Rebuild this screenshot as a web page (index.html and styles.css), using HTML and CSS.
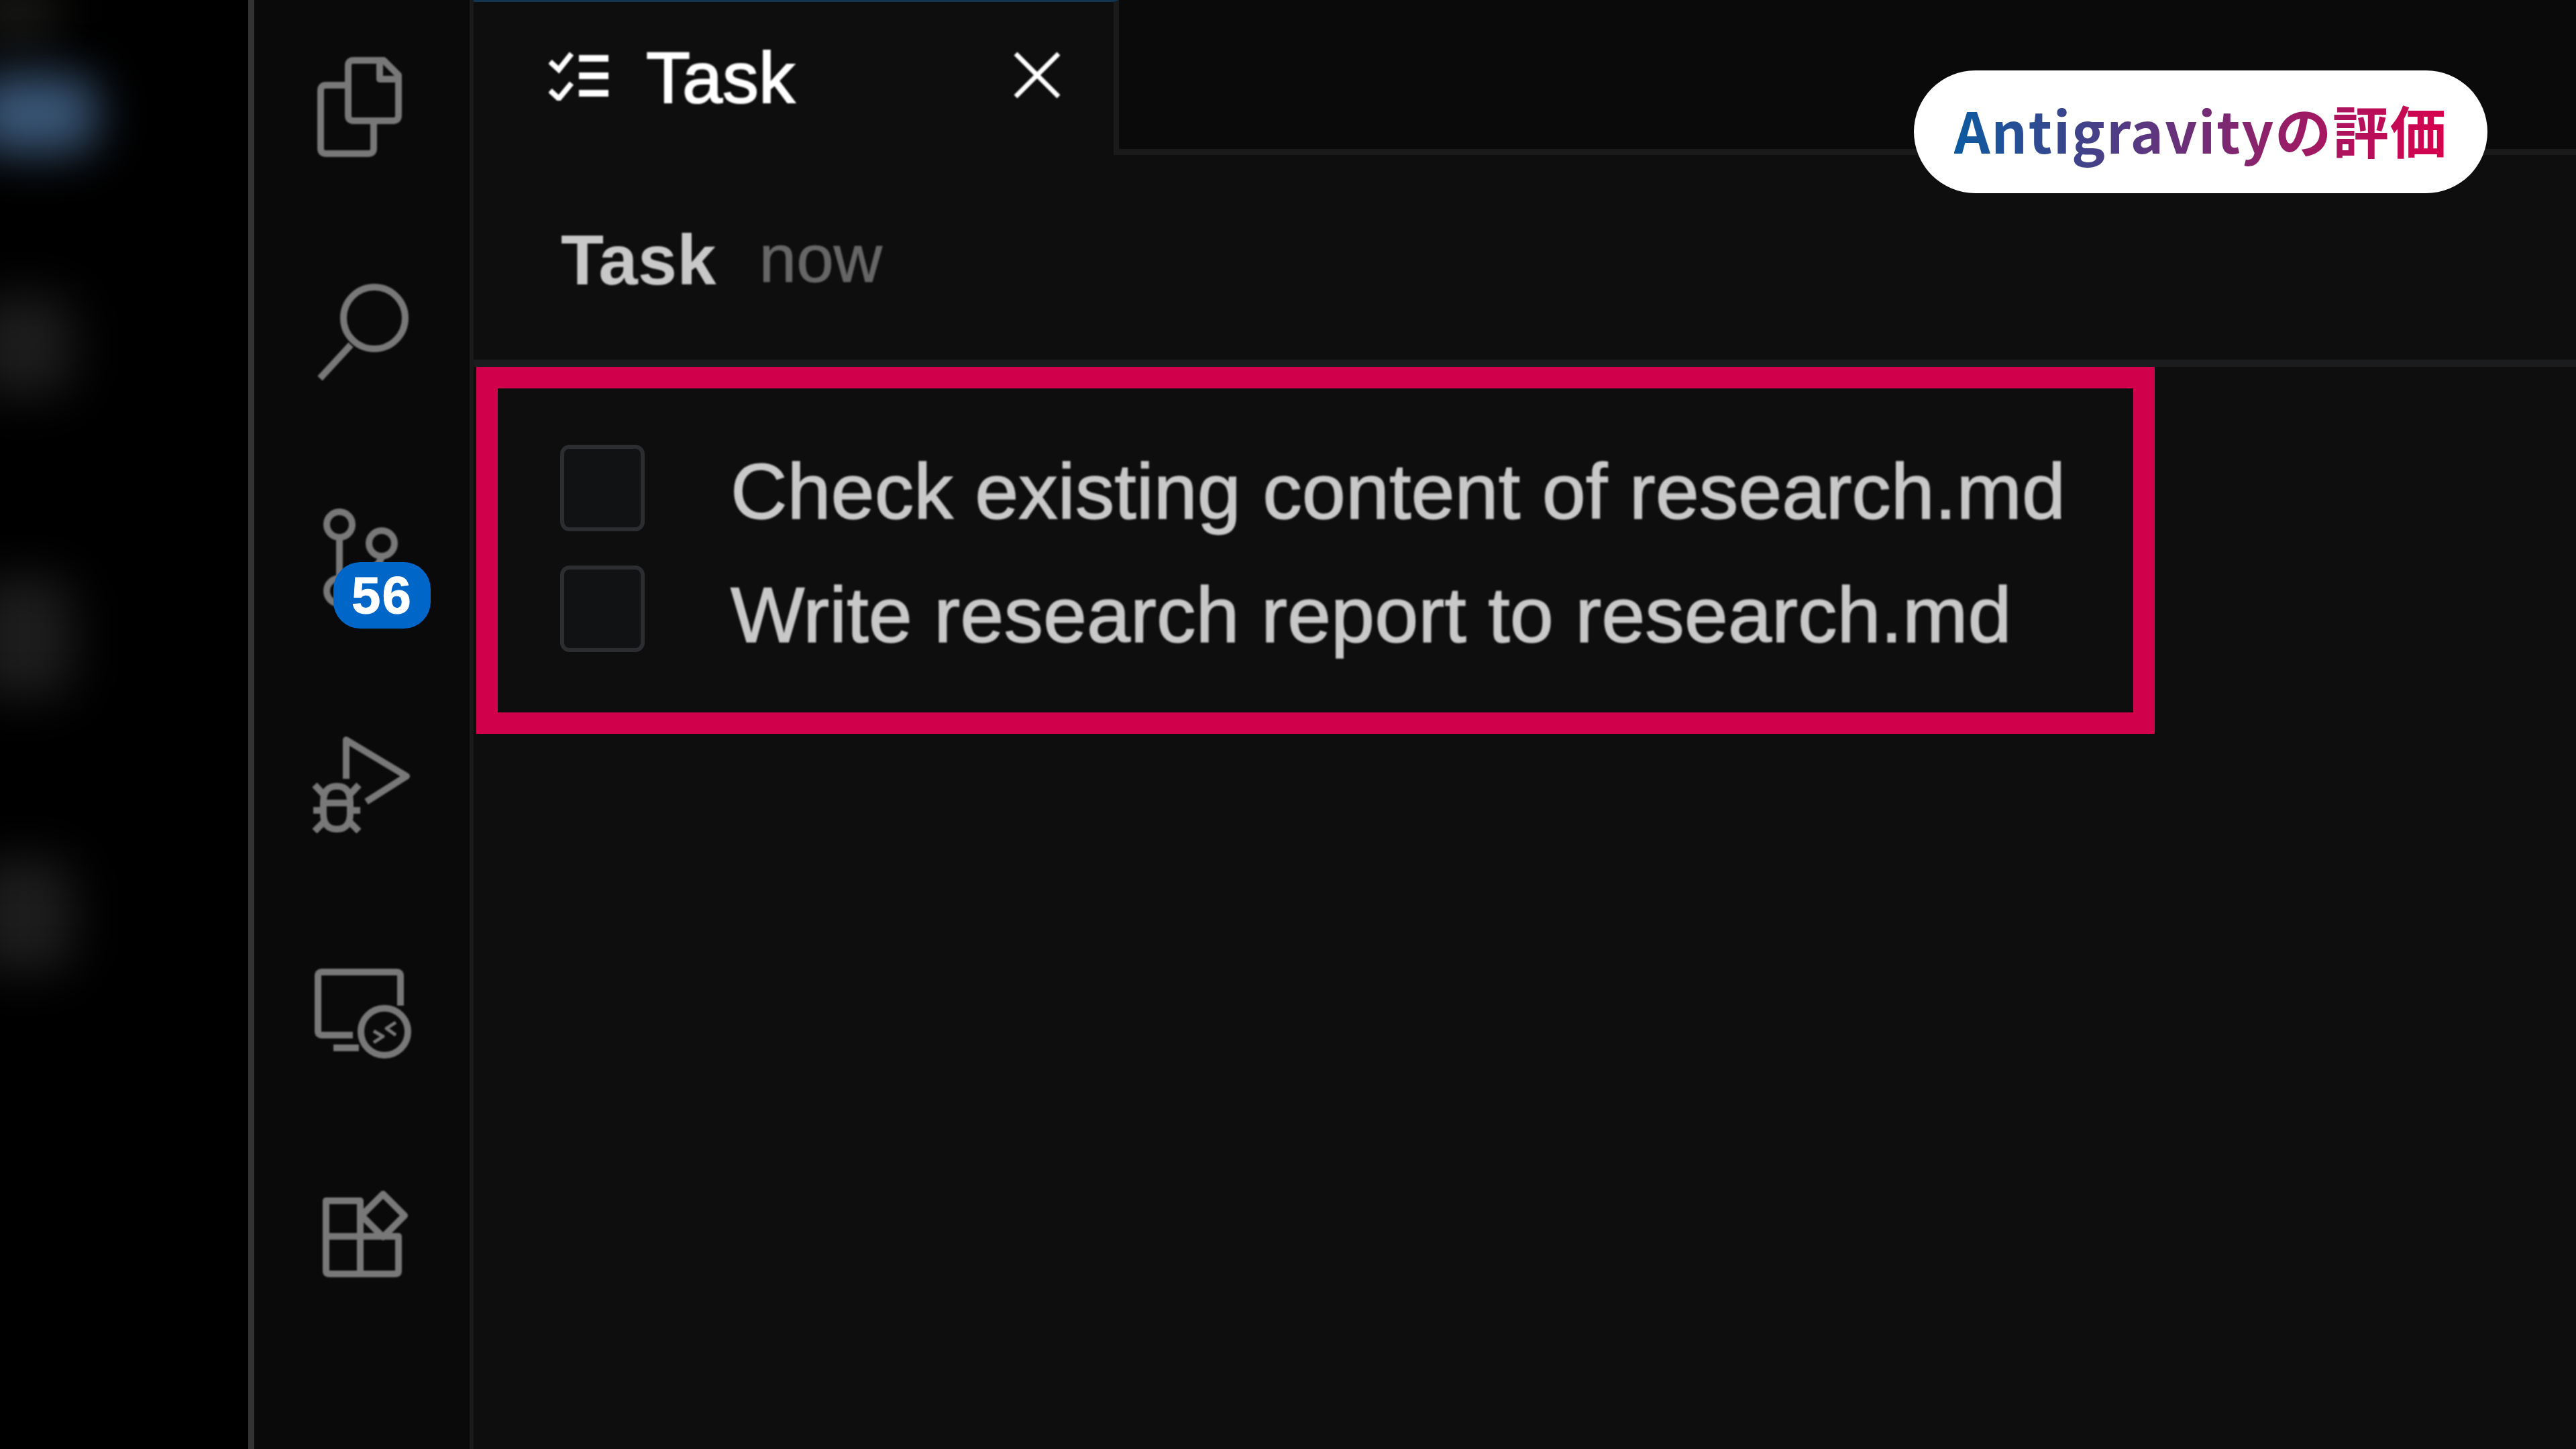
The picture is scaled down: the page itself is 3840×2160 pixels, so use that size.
FILE: index.html
```html
<!DOCTYPE html>
<html lang="ja">

<head>
  <meta charset="UTF-8">
  <meta name="viewport" content="width=device-width, initial-scale=1.0">
  <title>Antigravityの評価</title>
  <link rel="stylesheet" href="styles.css">
</head>

<body>
  <div class="blurred">
    <div class="blob blob-top"></div>
    <div class="blob blob-blue"></div>
    <div class="blob blob-a"></div>
    <div class="blob blob-b"></div>
    <div class="blob blob-c"></div>
  </div>

  <nav class="activity">
    <div class="activity-item">
      <svg class="activity-icon" viewBox="379 0 321 337">
        <path d="M527 90H572L594 112V172Q594 180 586 180H527Q519 180 519 172V98Q519 90 527 90Z" />
        <path d="M566 92V118H592" />
        <path d="M519 127H486Q478 127 478 135V221Q478 229 486 229H549Q557 229 557 221V180" />
      </svg>
    </div>
    <div class="activity-item">
      <svg class="activity-icon" viewBox="379 337 321 337">
        <circle cx="558" cy="474" r="46" />
        <path d="M523 514L477 564" />
      </svg>
    </div>
    <div class="activity-item">
      <svg class="activity-icon" viewBox="379 674 321 337">
        <circle cx="506" cy="782" r="19" />
        <circle cx="569" cy="810" r="19" />
        <circle cx="506" cy="881" r="19" />
        <path d="M506 801V862" />
        <path d="M569 829Q566 845 545 848" />
      </svg>
      <span class="badge">56</span>
    </div>
    <div class="activity-item">
      <svg class="activity-icon" viewBox="379 1011 321 337">
        <path d="M516 1161V1103L606 1157L546 1195" />
        <path d="M482 1204V1196Q482 1172 502 1172Q522 1172 522 1196V1212Q522 1236 502 1236Q482 1236 482 1212Z" />
        <path d="M482 1197H522" />
        <path d="M483 1185L469 1170M521 1185L535 1170M482 1208H467M522 1208H537M484 1224L469 1239M520 1224L535 1239" />
      </svg>
    </div>
    <div class="activity-item">
      <svg class="activity-icon" viewBox="379 1348 321 337">
        <path d="M526 1543H480Q474 1543 474 1537V1455Q474 1449 480 1449H591Q597 1449 597 1455V1499" />
        <path d="M497 1562H535" />
        <circle cx="573" cy="1538" r="35" />
        <path class="thin" d="M557 1537L571 1545L557 1554M590 1524L576 1533L590 1543" />
      </svg>
    </div>
    <div class="activity-item">
      <svg class="activity-icon" viewBox="379 1685 321 337">
        <path d="M486 1790H537V1899H490Q486 1899 486 1895Z" />
        <path d="M486 1843H594V1895Q594 1899 590 1899H537" />
        <path d="M571 1780L603 1812L571 1844L539 1812Z" />
      </svg>
    </div>
  </nav>

  <main class="editor">
    <div class="tabbar">
      <div class="tab">
        <svg class="tab-icon" viewBox="818 72 90 76">
          <path d="M820 90L833 102L852 78M820 133L833 145L852 122" />
          <path class="tab-lines" d="M863 85H907M863 111H907M863 137H907" />
        </svg>
        <span class="tab-title">Task</span>
        <svg class="tab-close" viewBox="0 0 70 70">
          <path d="M3 3L67 67M67 3L3 67" />
        </svg>
      </div>
      <div class="tabbar-rest">
        <div class="pill"><span class="pill-text">Antigravityの評価</span></div>
      </div>
    </div>

    <header class="doc-head">
      <span class="doc-title">Task</span>
      <span class="doc-time">now</span>
    </header>

    <div class="highlight">
      <div class="task-row">
        <span class="checkbox"></span>
        <span class="task-text">Check existing content of research.md</span>
      </div>
      <div class="task-row">
        <span class="checkbox checkbox-second"></span>
        <span class="task-text">Write research report to research.md</span>
      </div>
    </div>
  </main>
</body>

</html>
```

FILE: styles.css
```css
* {
  box-sizing: border-box;
}

body {
  margin: 0;
  width: 3840px;
  height: 2160px;
  display: flex;
  overflow: hidden;
  background: #0e0e0f;
  font-family: "Liberation Sans", Arial, sans-serif;
}

/* blurred sidebar on the far left */
.blurred {
  width: 379px;
  height: 2160px;
  flex-shrink: 0;
  background: #000;
  border-right: 9px solid #333;
  position: relative;
  overflow: hidden;
}

.blob {
  position: absolute;
  left: -40px;
  filter: blur(34px);
  border-radius: 40px;
  background: #1c1c1c;
}

.blob-top {
  top: -30px;
  width: 130px;
  height: 100px;
  background: #161614;
}

.blob-blue {
  top: 112px;
  width: 185px;
  height: 116px;
  background: #3a5778;
}

.blob-a {
  top: 440px;
  width: 150px;
  height: 150px;
}

.blob-b {
  top: 860px;
  width: 150px;
  height: 180px;
}

.blob-c {
  top: 1280px;
  width: 150px;
  height: 170px;
}

/* icon column */
.activity {
  width: 327px;
  height: 2160px;
  flex-shrink: 0;
  background: #0a0a0a;
  border-right: 6px solid #1a1a1a;
}

.activity-item {
  height: 337px;
  position: relative;
}

.activity-icon {
  display: block;
  width: 321px;
  height: 337px;
  fill: none;
  stroke: #787878;
  stroke-width: 10;
  stroke-linejoin: round;
  filter: blur(1px);
}

.activity-icon .thin {
  stroke-width: 5;
}

.badge {
  position: absolute;
  left: 118px;
  top: 164px;
  width: 145px;
  height: 99px;
  border-radius: 40px;
  background: #0066c8;
  color: #fff;
  font-size: 78px;
  font-weight: 700;
  line-height: 99px;
  text-align: center;
  letter-spacing: 2px;
  -webkit-text-stroke: 1px #fff;
}

.editor {
  flex: 1;
  min-width: 0;
}

/* tabs */
.tabbar {
  height: 231px;
  display: flex;
}

.tab {
  width: 962px;
  display: flex;
  align-items: center;
  padding: 0 79px 10px 112px;
  border-top: 3px solid #12344f;
  border-right: 8px solid #1a1a1a;
}

.tab-icon {
  width: 90px;
  height: 76px;
  flex-shrink: 0;
  fill: none;
  stroke: #fff;
  stroke-width: 8;
  filter: blur(1px);
}

.tab-icon .tab-lines {
  stroke-width: 10;
}

.tab-title {
  margin: 7px 0 0 55px;
  color: #fff;
  font-size: 108px;
  line-height: 120px;
  -webkit-text-stroke: 2px #fff;
  filter: blur(1px);
}

.tab-close {
  width: 70px;
  height: 70px;
  margin-left: auto;
  fill: none;
  stroke: #fff;
  stroke-width: 7;
  filter: blur(1px);
}

.tabbar-rest {
  flex: 1;
  background: #0a0a0a;
  border-bottom: 9px solid #1a1a1a;
  position: relative;
}

.pill {
  position: absolute;
  top: 105px;
  right: 132px;
  width: 855px;
  height: 183px;
  padding-bottom: 8px;
  border-radius: 92px;
  background: #fff;
  display: flex;
  align-items: center;
  justify-content: center;
}

.pill-text {
  font-family: "Noto Sans CJK JP", "Noto Sans", sans-serif;
  font-size: 84px;
  font-weight: 700;
  letter-spacing: 1.7px;
  background: linear-gradient(90deg, #0b5aa0, #d9004c);
  -webkit-background-clip: text;
  background-clip: text;
  color: transparent;
}

/* document header */
.doc-head {
  height: 316px;
  padding: 97px 0 0 130px;
  display: flex;
  gap: 64px;
  border-bottom: 11px solid #1a1c1d;
}

.doc-title {
  color: #c8c8c8;
  font-size: 105px;
  font-weight: 700;
  line-height: 120px;
  filter: blur(1px);
}

.doc-time {
  margin-top: -3px;
  color: #666;
  font-size: 100px;
  line-height: 120px;
  -webkit-text-stroke: 1px #666;
  filter: blur(1px);
}

/* red frame round the task list */
.highlight {
  width: 2502px;
  height: 547px;
  margin-left: 4px;
  padding: 56px 0 0 93px;
  border: 32px solid #d0004a;
}

.task-row {
  height: 184px;
  display: flex;
  align-items: center;
  gap: 128px;
}

.checkbox {
  width: 126px;
  height: 129px;
  flex-shrink: 0;
  border: 6px solid #2c2d30;
  border-radius: 14px;
  background: #111213;
}

.checkbox-second {
  margin-top: -8px;
}

.task-text {
  margin-top: 12px;
  color: #c8c8c8;
  font-size: 117px;
  line-height: 130px;
  -webkit-text-stroke: 1.5px #c8c8c8;
  filter: blur(1px);
}
```
